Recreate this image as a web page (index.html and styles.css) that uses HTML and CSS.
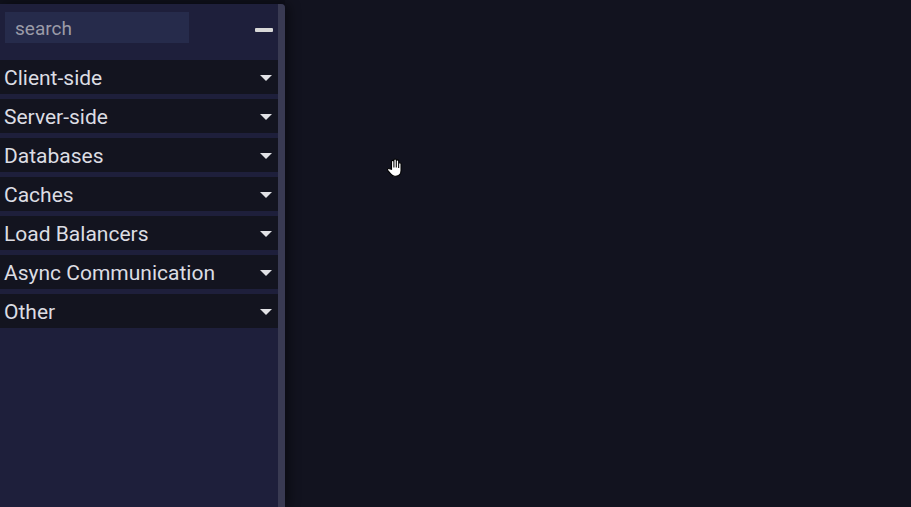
FILE: index.html
```html
<!DOCTYPE html>
<html>
<head>
<meta charset="utf-8">
<link rel="stylesheet" href="styles.css">
</head>
<body>
<div class="app">
  <aside class="panel">
    <div class="panel-body">
      <div class="header">
        <input class="search" type="text" placeholder="search">
        <span class="minus"></span>
      </div>
      <ul class="groups">
        <li class="group"><span>Client-side</span><i class="caret"></i></li>
        <li class="group"><span>Server-side</span><i class="caret"></i></li>
        <li class="group"><span>Databases</span><i class="caret"></i></li>
        <li class="group"><span>Caches</span><i class="caret"></i></li>
        <li class="group"><span>Load Balancers</span><i class="caret"></i></li>
        <li class="group"><span>Async Communication</span><i class="caret"></i></li>
        <li class="group"><span>Other</span><i class="caret"></i></li>
      </ul>
    </div>
    <div class="scrollbar"></div>
  </aside>
  <main class="canvas">
    <svg class="cursor" width="17" height="19" viewBox="0 0 14 16">
      <path d="M4.5 9.5V3a1 1 0 0 1 2 0v5V1.8a1 1 0 0 1 2 0V8V2.6a1 1 0 0 1 2 0V8.5V5a1 1 0 0 1 2 0v5.5c0 2.8-1.8 4.8-4.5 4.8H7.2c-1.4 0-2.4-.6-3.2-1.7L1.3 10.4a1 1 0 0 1 1.5-1.3z" fill="#ffffff" stroke="#000" stroke-width="0.9"/>
    </svg>
  </main>
</div>
</body>
</html>
```
FILE: styles.css
```css
* { box-sizing: border-box; }
html, body {
  margin: 0;
  padding: 0;
  width: 911px;
  height: 507px;
  overflow: hidden;
  background: #12131f;
  font-family: Roboto, "Noto Sans", sans-serif;
}
.app {
  display: flex;
  height: 507px;
  padding-top: 4px;
  background: #0f101b;
}
.panel {
  width: 285px;
  height: 503px;
  display: flex;
  background: #1e1f3b;
  border-top-right-radius: 4px;
  box-shadow: 4px 0 12px rgba(0, 0, 0, 0.45);
  position: relative;
  z-index: 1;
}
.panel-body {
  width: 278px;
}
.scrollbar {
  width: 7px;
  background: #393a52;
  border-top-right-radius: 4px;
}
.header {
  height: 56px;
  display: flex;
  justify-content: space-between;
  align-items: flex-start;
  padding: 8px 5px 0 5px;
}
.search {
  width: 184px;
  height: 31px;
  border: none;
  outline: none;
  background: #262b4b;
  color: #cfd0da;
  font-family: Roboto, "Noto Sans", sans-serif;
  font-size: 19px;
  padding: 1px 10px 0 10px;
}
.search::placeholder {
  color: #9b9ba8;
}
.minus {
  width: 18px;
  height: 4px;
  margin-top: 16px;
  background: #d8d8d8;
  border-radius: 1px;
}
.groups {
  list-style: none;
  margin: 0;
  padding: 0;
}
.group {
  height: 34px;
  margin-bottom: 5px;
  background: #13141f;
  display: flex;
  align-items: center;
  justify-content: space-between;
  padding: 2px 6px 0 4px;
  color: #dcdde3;
  font-size: 21px;
}
.caret {
  width: 0;
  height: 0;
  border-left: 6.5px solid transparent;
  border-right: 6.5px solid transparent;
  border-top: 6px solid #e2e2e6;
  margin-top: 0;
}
.canvas {
  flex: 1;
  background: #12131f;
  margin-top: -4px;
  position: relative;
}
.cursor {
  position: absolute;
  left: 101px;
  top: 158px;
}
```
